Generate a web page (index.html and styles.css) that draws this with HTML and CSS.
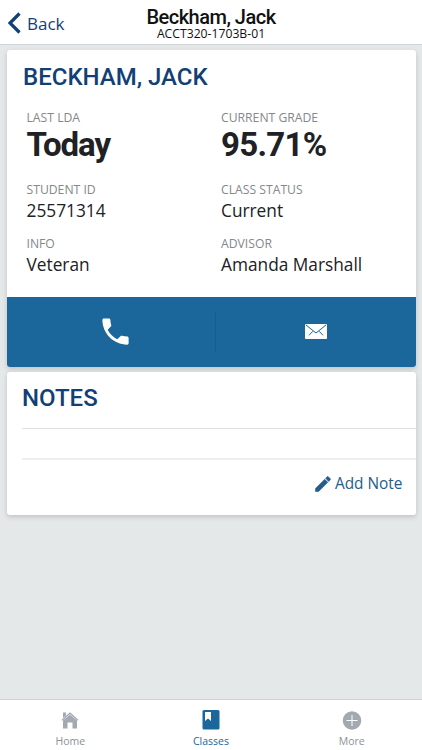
FILE: index.html
```html
<!DOCTYPE html>
<html lang="en">
<head>
    <meta charset="UTF-8">
    <meta name="viewport" content="width=device-width, initial-scale=1.0">
    <title>Beckham, Jack</title>
    <link rel="stylesheet" href="styles.css">
</head>
<body>
    <header class="header">
        <a class="back" href="#">
            <svg width="13" height="22" viewBox="0 0 13 22"><path d="M11.5 1.500 2 11l9.500 9.500" fill="none" stroke="currentColor" stroke-width="3.200"/></svg>
            <span>Back</span>
        </a>
        <div class="header-text">
            <h1>Beckham, Jack</h1>
            <p>ACCT320-1703B-01</p>
        </div>
    </header>

    <main class="content">
        <section class="card student">
            <h2 class="student-name">BECKHAM, JACK</h2>
            <dl class="details">
                <div class="detail big">
                    <dt>LAST LDA</dt>
                    <dd class="today">Today</dd>
                </div>
                <div class="detail big">
                    <dt>CURRENT GRADE</dt>
                    <dd>95.71%</dd>
                </div>
                <div class="detail">
                    <dt>STUDENT ID</dt>
                    <dd>25571314</dd>
                </div>
                <div class="detail">
                    <dt>CLASS STATUS</dt>
                    <dd>Current</dd>
                </div>
                <div class="detail">
                    <dt>INFO</dt>
                    <dd>Veteran</dd>
                </div>
                <div class="detail">
                    <dt>ADVISOR</dt>
                    <dd>Amanda Marshall</dd>
                </div>
            </dl>
            <div class="actions">
                <a class="action call" href="#" aria-label="Call">
                    <svg width="35" height="35" viewBox="0 0 24 24"><path fill="currentColor" d="M6.620 10.790c1.440 2.830 3.760 5.140 6.590 6.590l2.200-2.200c.27-.27.67-.36 1.020-.24 1.120.37 2.330.57 3.570.57.55 0 1 .45 1 1V20c0 .55-.45 1-1 1-9.390 0-17-7.610-17-17 0-.55.45-1 1-1h3.500c.55 0 1 .45 1 1 0 1.250.2 2.450.57 3.570.11.35.03.74-.25 1.020l-2.200 2.200z"/></svg>
                </a>
                <a class="action" href="#" aria-label="Email">
                    <svg width="22" height="15" viewBox="0 0 22 15"><rect width="22" height="15" rx=".8" fill="currentColor"/><path d="M.8.8 11 9 21.200.8M4 11.300l3.800-4M18 11.300l-3.800-4" fill="none" stroke="#1b669b"/></svg>
                </a>
            </div>
        </section>

        <section class="card notes">
            <h2>NOTES</h2>
            <div class="note-row"></div>
            <a class="add-note" href="#">
                <svg width="20" height="20" viewBox="0 0 24 24"><path fill="currentColor" d="M3 17.250V21h3.750L17.810 9.940l-3.750-3.750L3 17.250zM20.710 7.040c.39-.39.39-1.020 0-1.410l-2.340-2.340c-.39-.39-1.020-.39-1.410 0l-1.830 1.830 3.750 3.750 1.830-1.830z" stroke="currentColor" stroke-width=".7"/></svg>
                <span>Add Note</span>
            </a>
        </section>
    </main>

    <nav class="tabs">
        <a class="tab" href="#">
            <svg width="20" height="20" viewBox="0 0 20 20"><path fill="currentColor" d="M3 2.500h3v3L3 8zM10 4.800l7 5.700v8h-4.500v-6h-5v6H3v-8z"/><path d="M2 10.200 10 3.200l8 7" fill="none" stroke="currentColor" stroke-width="1.300"/></svg>
            <span>Home</span>
        </a>
        <a class="tab active" href="#">
            <svg width="20" height="20" viewBox="0 0 20 20"><rect x="1.500" y="0" width="17" height="19.500" rx="1.500" fill="currentColor"/><path d="M4 2h6v9L7 8.500 4 11z" fill="#fff"/></svg>
            <span>Classes</span>
        </a>
        <a class="tab" href="#">
            <svg width="20" height="20" viewBox="0 0 20 20"><circle cx="10" cy="10.500" r="9.300" fill="currentColor"/><path d="M10 5v11M4.500 10.500h11" stroke="#fff" fill="none"/></svg>
            <span>More</span>
        </a>
    </nav>
</body>
</html>
```

FILE: styles.css
```css
* {
    box-sizing: border-box;
}

body {
    display: flex;
    flex-direction: column;
    height: 100vh;
    margin: 0;
    background: #e4e8e9;
    color: #202124;
    font-family: "Open Sans", "Noto Sans", sans-serif;
    overflow: hidden;
}

h1, h2, p, dl, dd {
    margin: 0;
}

a {
    color: inherit;
    text-decoration: none;
}

svg {
    display: block;
    flex: none;
}

.header {
    display: grid;
    grid-template-columns: 100px 1fr 100px;
    height: 45px;
    background: #fff;
    border-bottom: 1px solid #d3d6d8;
}

.back {
    display: flex;
    align-items: center;
    gap: 6px;
    padding: 2px 0 0 8px;
    color: #123f75;
    font-size: 17px;
}

.header-text {
    padding-top: 6px;
    color: #111;
    text-align: center;
    white-space: nowrap;
}

.header-text h1 {
    font: 500 20px/22px Roboto, sans-serif;
    letter-spacing: -0.5px;
}

.header-text p {
    font-size: 12.2px;
    line-height: 11px;
}

.content {
    flex: 1;
    padding: 5px 6.5px 0;
}

.card {
    background: #fff;
    border-radius: 3px;
    box-shadow: 0 2px 5px rgba(0, 0, 0, 0.16);
    overflow: hidden;
}

.card h2 {
    color: #123f75;
    font: 500 24px/28px Roboto, sans-serif;
}

.student {
    height: 316.5px;
    margin-bottom: 5.5px;
}

.card .student-name {
    height: 41px;
    padding: 12.5px 0 0 16.5px;
}

.details {
    display: grid;
    grid-template-columns: 194.5px 1fr;
    grid-template-rows: 72px 54px 64px;
    height: 206px;
    padding: 17.5px 0 0 20px;
}

.detail dt {
    color: #85878b;
    font-size: 12.2px;
    line-height: 18px;
}

.detail dd {
    font-size: 17.3px;
    line-height: 23px;
}

.detail.big dd {
    font: 700 33px/38px Roboto, sans-serif;
    letter-spacing: -0.7px;
    margin-top: -1px;
}

.detail.big .today {
    letter-spacing: -1.1px;
}

.actions {
    display: grid;
    grid-template-columns: 209px 1fr;
    align-items: center;
    height: 69.5px;
    background: #1b669b;
    color: #fff;
}

.action {
    display: flex;
    align-items: center;
    justify-content: center;
    height: 40px;
}

.call {
    padding-left: 10px;
    border-right: 1px solid #195d8e;
}

.notes {
    height: 142.5px;
    padding: 12px 0 0 15.5px;
}

.notes h2 {
    height: 44px;
}

.note-row {
    height: 32px;
    border-top: 1px solid #dfe1e2;
    border-bottom: 2px solid #eeefef;
}

.add-note {
    display: flex;
    align-items: center;
    justify-content: flex-end;
    gap: 2px;
    padding: 12px 13px 0 0;
    color: #245d89;
    font-size: 15.4px;
    line-height: 24px;
}

.tabs {
    display: grid;
    grid-template-columns: repeat(3, 1fr);
    height: 51.5px;
    background: #fff;
    border-top: 1px solid #ced1d3;
}

.tab {
    display: flex;
    flex-direction: column;
    align-items: center;
    padding-top: 10px;
    color: #a3a9b0;
    font-size: 10.5px;
    line-height: 14px;
}

.tab span {
    margin-top: 4px;
    color: #8e9195;
}

.tab.active, .tab.active span {
    color: #1b669b;
}
```
